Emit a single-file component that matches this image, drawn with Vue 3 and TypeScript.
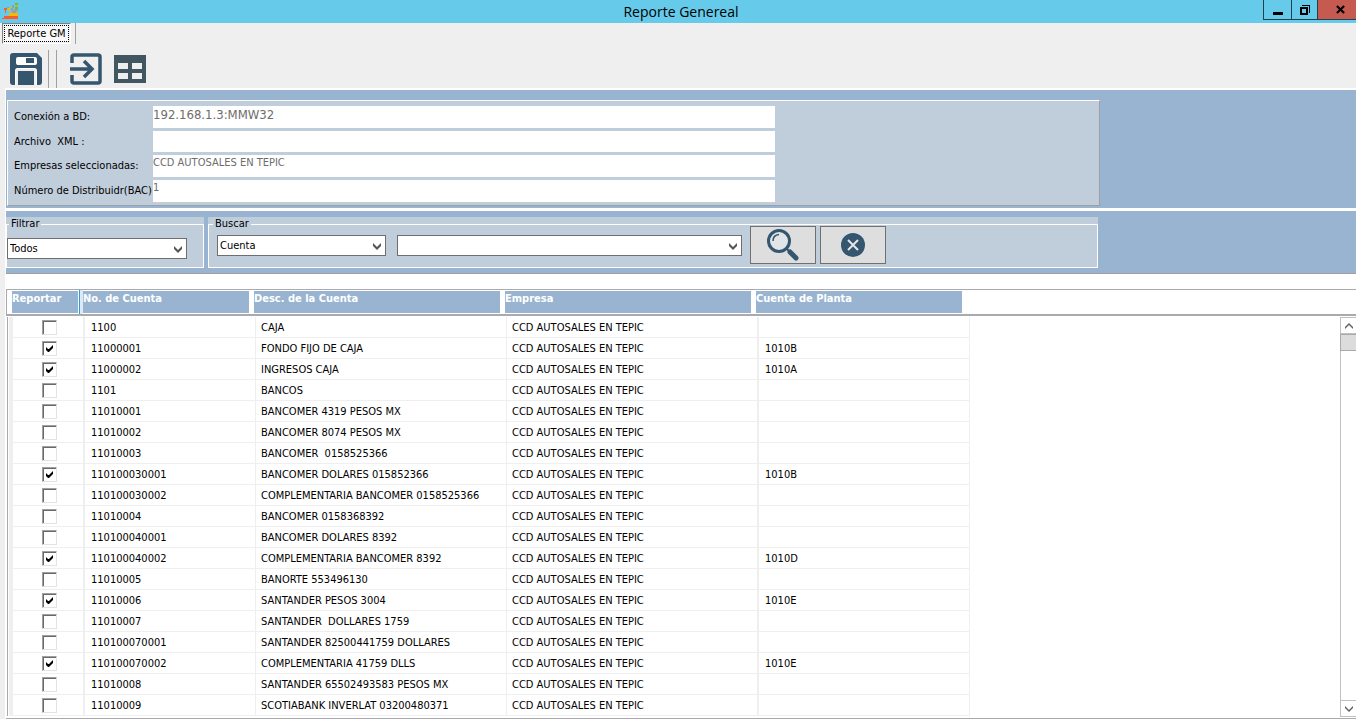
<script setup lang="ts">
import { ref } from 'vue'

interface Account {
  report: boolean
  number: string
  description: string
  company: string
  plant: string
}

const company = 'CCD AUTOSALES EN TEPIC'

const entries: [string, string, string?][] = [
  ['1100', 'CAJA'],
  ['11000001', 'FONDO FIJO DE CAJA', '1010B'],
  ['11000002', 'INGRESOS CAJA', '1010A'],
  ['1101', 'BANCOS'],
  ['11010001', 'BANCOMER 4319 PESOS MX'],
  ['11010002', 'BANCOMER 8074 PESOS MX'],
  ['11010003', 'BANCOMER  0158525366'],
  ['110100030001', 'BANCOMER DOLARES 015852366', '1010B'],
  ['110100030002', 'COMPLEMENTARIA BANCOMER 0158525366'],
  ['11010004', 'BANCOMER 0158368392'],
  ['110100040001', 'BANCOMER DOLARES 8392'],
  ['110100040002', 'COMPLEMENTARIA BANCOMER 8392', '1010D'],
  ['11010005', 'BANORTE 553496130'],
  ['11010006', 'SANTANDER PESOS 3004', '1010E'],
  ['11010007', 'SANTANDER  DOLLARES 1759'],
  ['110100070001', 'SANTANDER 82500441759 DOLLARES'],
  ['110100070002', 'COMPLEMENTARIA 41759 DLLS', '1010E'],
  ['11010008', 'SANTANDER 65502493583 PESOS MX'],
  ['11010009', 'SCOTIABANK INVERLAT 03200480371'],
]

const accounts = ref<Account[]>(
  entries.map(([number, description, plant]) => ({
    report: plant !== undefined,
    number,
    description,
    company,
    plant: plant ?? '',
  })),
)

const connection = ref('192.168.1.3:MMW32')
const xmlFile = ref('')
const selectedCompanies = ref(company)
const dealerNumber = ref('1')
const filter = ref('Todos')
const searchField = ref('Cuenta')
const searchValue = ref('')

function clearSearch(): void {
  searchValue.value = ''
}
</script>

<template>
  <div class="window">
    <header class="titlebar">
      <svg class="logo" viewBox="0 0 16 16" shape-rendering="crispEdges" aria-hidden="true">
        <path fill="#ff5a28" d="M2 13h14v3H0v-1h2zM2 5h3v2H4v3H3V7H2z" />
        <path fill="#ffb500" d="M7 10h9v3H7zM6 5h2v3H6zM9 3h1v2H9z" />
        <path fill="#8fa3a5" d="M5 4h2v1H5zM9 5h2v3H9zM10 2h2v3h-2zM12 6h4v2h-2v2h-4V8h2zM14 3h1v3h-1z" />
        <path fill="#8ab800" d="M13 0h3v2h-3zM13 4h3v2h-3z" />
      </svg>
      <h1>Reporte Genereal</h1>
      <div class="window-buttons">
        <button type="button" class="minimize" aria-label="Minimizar">
          <svg viewBox="0 0 10 10" shape-rendering="crispEdges"><path d="M0 7h10v3H0z" /></svg>
        </button>
        <button type="button" class="restore" aria-label="Restaurar">
          <svg viewBox="0 0 10 10" shape-rendering="crispEdges">
            <path fill-rule="evenodd" d="M0 2h8v8H0zM2 4v4h4V4zM2 0h8v8H9V1H2z" />
          </svg>
        </button>
        <button type="button" class="close" aria-label="Cerrar">
          <svg viewBox="0 0 10 10"><path fill="none" stroke="#000" stroke-width="2.400" d="M1 1l8 8M9 1L1 9" /></svg>
        </button>
      </div>
    </header>

    <nav class="tabs">
      <button type="button" class="tab"><span>Reporte GM</span></button>
    </nav>

    <div class="toolbar">
      <button type="button" class="tool" aria-label="Guardar">
        <svg viewBox="0 0 32 32">
          <path fill="#34566f" d="M3 0h24l5 5v24q0 3-3 3h-2V18q0-3-3-3H8q-3 0-3 3v14H3q-3 0-3-3V3q0-3 3-3z" />
          <path fill="#34566f" d="M8 18h16v14H8z" />
          <path fill="#fff" d="M8 4h17q2 0 2 2v4q0 2-2 2H8q-2 0-2-2V6q0-2 2-2z" />
          <path fill="#34566f" d="M16 5h8v5h-8z" />
          <path fill="none" stroke="#fff" d="M5.500 32V18q0-2.500 2.500-2.500h16q2.500 0 2.500 2.500v14" />
        </svg>
      </button>
      <span class="divider"></span>
      <span class="divider"></span>
      <button type="button" class="tool export" aria-label="Exportar">
        <svg viewBox="0 0 32 32" fill="none" stroke="#34566f">
          <path stroke-width="3.500" d="M2 10V4q0-2 2-2h24q2 0 2 2v24q0 2-2 2H4q-2 0-2-2v-6" />
          <path stroke-width="3.500" d="M0 16h21M14 8l8 8-8 8" />
        </svg>
      </button>
      <button type="button" class="tool" aria-label="Tabla">
        <svg viewBox="0 0 32 32" shape-rendering="crispEdges">
          <path fill="#425660" fill-rule="evenodd" d="M0 2h32v28H0zM4 10v6h10v-6zM18 10v6h10v-6zM4 20v6h10v-6zM18 20v6h10v-6z" />
        </svg>
      </button>
    </div>

    <main class="content">
      <section class="band connection-band">
        <div class="connection">
          <label for="connection">Conexión a BD:</label>
          <input id="connection" v-model="connection" class="large" type="text" />
          <label for="xml">Archivo&nbsp; XML :</label>
          <input id="xml" v-model="xmlFile" type="text" />
          <label for="companies">Empresas seleccionadas:</label>
          <input id="companies" v-model="selectedCompanies" type="text" />
          <label for="dealer">Número de Distribuidr(BAC)</label>
          <input id="dealer" v-model="dealerNumber" type="text" />
        </div>
      </section>

      <section class="band search-band">
        <div class="group filter-group">
          <fieldset>
            <legend>Filtrar</legend>
            <div class="combo filter-combo">
              <select v-model="filter" aria-label="Filtrar">
                <option>Todos</option>
              </select>
              <svg viewBox="0 0 8 7"><path d="M0 0l4 4 4-4v3L4 7 0 3z" /></svg>
            </div>
          </fieldset>
        </div>
        <div class="group search-group">
          <fieldset>
            <legend>Buscar</legend>
            <div class="combo field-combo">
              <select v-model="searchField" aria-label="Buscar por">
                <option>Cuenta</option>
              </select>
              <svg viewBox="0 0 8 7"><path d="M0 0l4 4 4-4v3L4 7 0 3z" /></svg>
            </div>
            <div class="combo value-combo">
              <select v-model="searchValue" aria-label="Valor">
                <option value=""></option>
              </select>
              <svg viewBox="0 0 8 7"><path d="M0 0l4 4 4-4v3L4 7 0 3z" /></svg>
            </div>
            <div class="actions">
              <button type="button" aria-label="Buscar">
                <svg viewBox="0 0 32 32">
                  <circle cx="12" cy="12" r="10.500" fill="#e2e5e7" stroke="#34566f" stroke-width="3" />
                  <path fill="none" stroke="#34566f" stroke-width="1.500" d="M6 12q0-6 6-6.500" />
                  <path stroke="#34566f" stroke-width="2" d="M19 19l3 3" />
                  <path stroke="#34566f" stroke-width="5" stroke-linecap="round" d="M23 23l6 6" />
                </svg>
              </button>
              <button type="button" aria-label="Limpiar" @click="clearSearch">
                <svg viewBox="0 0 32 32">
                  <circle cx="16" cy="16" r="12" fill="#34566f" />
                  <path stroke="#e4e8ea" stroke-width="2" d="M11 11l10 10M21 11L11 21" />
                </svg>
              </button>
            </div>
          </fieldset>
        </div>
      </section>

      <section class="grid">
        <table>
          <colgroup>
            <col class="c-report" />
            <col class="c-number" />
            <col class="c-text" />
            <col class="c-text" />
            <col class="c-plant" />
            <col />
          </colgroup>
          <thead>
            <tr>
              <th><span>Reportar</span></th>
              <th><span>No. de Cuenta</span></th>
              <th><span>Desc. de la Cuenta</span></th>
              <th><span>Empresa</span></th>
              <th><span>Cuenta de Planta</span></th>
              <td class="rest"></td>
            </tr>
          </thead>
          <tbody>
            <tr v-for="account in accounts" :key="account.number">
              <td class="report">
                <input v-model="account.report" type="checkbox" :aria-label="`Reportar ${account.number}`" />
              </td>
              <td class="number">{{ account.number }}</td>
              <td class="text">{{ account.description }}</td>
              <td class="text">{{ account.company }}</td>
              <td class="plant">{{ account.plant }}</td>
              <td class="rest"></td>
            </tr>
          </tbody>
        </table>
        <div class="scroll">
          <div class="scroll-head"></div>
          <div class="scrollbar">
            <button type="button" aria-label="Subir">
              <svg viewBox="0 0 8 6"><path d="M0 4l4-4 4 4v2L4 2 0 6z" /></svg>
            </button>
            <div class="thumb"></div>
            <button type="button" class="down" aria-label="Bajar">
              <svg viewBox="0 0 8 6"><path d="M0 0l4 4 4-4v2L4 6 0 2z" /></svg>
            </button>
          </div>
        </div>
      </section>
    </main>
  </div>
</template>

<style>
body {
  margin: 0;
}
</style>

<style scoped>
.window {
  display: flex;
  flex-direction: column;
  height: 100vh;
  overflow: hidden;
  background: #efefef;
  color: #000;
  font-family: "DejaVu Sans Condensed", "DejaVu Sans", sans-serif;
  font-size: 11px;
  line-height: 14px;
}
.window * {
  box-sizing: border-box;
}
button,
input,
select {
  margin: 0;
  padding: 0;
  border: 0;
  border-radius: 0;
  background: none;
  color: inherit;
  font: inherit;
}
svg {
  display: block;
}

/* Title bar */
.titlebar {
  display: grid;
  grid-template-columns: 93px 1fr 93px;
  flex: none;
  height: 23px;
  background: #66cbea;
}
.logo {
  width: 16px;
  height: 16px;
  margin: 3px 0 0 2px;
}
h1 {
  margin: 0;
  padding-left: 6px;
  font: 400 14px/23px "Open Sans", "Noto Sans", sans-serif;
  text-align: center;
}
.window-buttons {
  display: flex;
  height: 20px;
}
.window-buttons button {
  display: flex;
  align-items: center;
  justify-content: center;
  width: 28px;
  border: 1px solid #24404c;
  border-width: 0 0 1px 1px;
}
.window-buttons .restore {
  width: 26px;
}
.window-buttons .close {
  flex: 1;
  padding-left: 6px;
  background: #c45a50;
}
.window-buttons svg {
  width: 10px;
  height: 10px;
}
.window-buttons .close svg {
  width: 9px;
  height: 9px;
}

/* Tabs */
.tabs {
  display: flex;
  flex: none;
  width: 76px;
  height: 21px;
  padding-left: 2px;
  border-right: 1px solid #a0a0a0;
}
.tab {
  width: 69px;
  height: 21px;
  padding: 1px;
  border: 1px solid #fff;
  border-top-color: #808080;
  border-left-color: #808080;
}
.tab span {
  display: block;
  border: 1px dotted #000;
  background: #f8f8f8;
  line-height: 15px;
  white-space: nowrap;
}

/* Toolbar */
.toolbar {
  display: flex;
  align-items: flex-start;
  flex: none;
  height: 44px;
  padding: 6px 0 0 10px;
}
.tool {
  width: 32px;
  height: 32px;
  margin: 3px 12px 0 0;
}
.tool:first-child {
  margin-right: 6px;
}
.tool svg {
  width: 32px;
  height: 32px;
}
.divider {
  width: 1px;
  height: 38px;
  margin-right: 7px;
  background: #a0a0a0;
}
.export {
  margin-left: 6px;
}

/* Panels */
.content {
  display: flex;
  flex-direction: column;
  flex: 1;
  min-height: 0;
  margin-left: 5px;
  border-left: 1px solid #fff;
}
.band {
  flex: none;
  background: #99b4d1;
}
.connection-band {
  padding: 10px 0 2px 1px;
  border-top: 2px solid #fff;
}
.connection {
  display: grid;
  grid-template-columns: 138px minmax(0, 622px);
  grid-template-rows: 22px 21px 22px 22px;
  row-gap: 3px;
  column-gap: 1px;
  max-width: 1093px;
  padding: 5px 0 3px 6px;
  border: 1px solid #fff;
  border-right-color: #a0a0a0;
  border-bottom-color: #a0a0a0;
  background: #c0cddb;
}
.connection label {
  align-self: center;
  white-space: nowrap;
}
.connection input {
  width: 100%;
  padding-bottom: 6px;
  background: #fff;
  color: #6d6d6d;
}
.connection .large {
  padding-bottom: 4px;
  font-size: 13px;
}
.search-band {
  display: flex;
  gap: 4px;
  padding: 6px 0 5px;
  border-top: 3px solid #fff;
  border-bottom: 1px solid #a0a0a0;
}
.group {
  height: 51px;
  background: #c0cddb;
}
.filter-group {
  width: 198px;
}
.search-group {
  width: 890px;
}
fieldset {
  display: flex;
  align-items: flex-start;
  min-width: 0;
  height: 51px;
  margin: 0;
  padding: 0 8px;
  border: 1px solid #fff;
}
.filter-group fieldset {
  padding: 0;
}
legend {
  margin: 0 -4px;
  padding: 0 2px;
}
.filter-group legend {
  margin-left: 2px;
}
.combo {
  position: relative;
  height: 21px;
  border: 1px solid #6e6e6e;
  background: #fff;
}
.combo select {
  width: 100%;
  height: 19px;
  padding: 0 20px 0 2px;
  appearance: none;
}
.combo svg {
  position: absolute;
  top: 7px;
  right: 4px;
  width: 8px;
  height: 7px;
  fill: #555;
  pointer-events: none;
}
.filter-combo {
  width: 180px;
  margin-top: 7px;
}
.field-combo {
  width: 169px;
  margin: 4px 11px 0 0;
}
.value-combo {
  width: 345px;
  margin: 4px 8px 0 0;
}
.actions {
  display: flex;
  gap: 4px;
  margin-top: -5px;
}
.actions button {
  display: flex;
  align-items: center;
  justify-content: center;
  width: 66px;
  height: 38px;
  border: 1px solid #707070;
  background: #dedede;
}
.actions svg {
  width: 32px;
  height: 32px;
}

/* Account grid */
.grid {
  display: flex;
  flex: 1;
  min-height: 0;
  padding-top: 15px;
  border-bottom: 1px solid #a9a9ae;
  background: #fff;
  overflow: hidden;
}
table {
  flex: 1;
  width: 0;
  height: 0;
  table-layout: fixed;
  border-spacing: 0;
}
.c-report {
  width: 77px;
}
.c-number {
  width: 171px;
}
.c-text {
  width: 251px;
}
.c-plant {
  width: 214px;
}
thead th,
thead .rest {
  height: 27px;
  padding: 1px 5px 1px 0;
  border-top: 1px solid #a9a9ae;
  border-bottom: 2px solid #a9a9ae;
  text-align: left;
}
thead th:first-child {
  padding-left: 5px;
  border-left: 1px solid #a9a9ae;
  background: linear-gradient(90deg, transparent 72px, #2a9fd6 72px, #2a9fd6 73px, #dce9f7 73px);
}
thead th:nth-child(5) {
  padding-right: 8px;
}
thead th span {
  display: block;
  height: 22px;
  background: #99b4d1;
  color: #fff;
  font-weight: 700;
  line-height: 16px;
}
tbody td {
  height: 21px;
  padding: 2px 0 0;
  border-bottom: 1px solid #efefef;
  white-space: pre;
}
tbody tr:first-child td {
  height: 22px;
  border-top: 1px solid #fff;
}
tbody .report {
  padding: 0 0 0 10px;
  border-bottom: 0;
  background:
    linear-gradient(90deg, #fff 1px, #a9a9ae 1px, #a9a9ae 2px, #fff 2px, #fff 3px, #efefef 3px) left top / 7px 100% no-repeat,
    linear-gradient(#efefef, #efefef) left bottom / 100% 1px no-repeat;
}
tbody .number {
  padding-left: 6px;
  border-left: 2px solid #efefef;
}
tbody .text {
  padding-left: 7px;
  background: linear-gradient(90deg, transparent 1px, #efefef 1px, #efefef 2px, transparent 2px);
}
tbody .plant {
  padding-left: 9px;
  border-right: 1px solid #efefef;
  background: linear-gradient(90deg, transparent 1px, #efefef 1px, #efefef 3px, transparent 3px);
}
tbody .rest {
  border-bottom: 0;
}
input[type="checkbox"] {
  display: block;
  width: 15px;
  height: 15px;
  margin: 0 auto;
  padding: 3px;
  border: 1px solid #e3e3e3;
  border-top-color: #a0a0a0;
  border-left-color: #a0a0a0;
  background: #fff;
  box-shadow: inset 1px 1px #696969;
  appearance: none;
}
input[type="checkbox"]:checked::before {
  display: block;
  width: 7px;
  height: 7px;
  background: #000;
  clip-path: polygon(0 2px, 0 5px, 2px 7px, 3px 7px, 7px 3px, 7px 0, 3px 4px, 2px 4px);
  content: "";
}

/* Scroll bar */
.scroll {
  display: flex;
  flex-direction: column;
  width: 16px;
}
.scroll-head {
  height: 27px;
  border-top: 1px solid #a9a9ae;
  border-bottom: 2px solid #a9a9ae;
}
.scrollbar {
  display: flex;
  flex: 1;
  flex-direction: column;
  margin: 1px 0;
  border-left: 1px solid #c0c0c0;
}
.scrollbar button {
  display: flex;
  align-items: center;
  justify-content: center;
  height: 17px;
  border: 1px solid #c0c0c0;
  border-width: 1px 0;
}
.scrollbar svg {
  width: 8px;
  height: 6px;
  fill: #606060;
}
.thumb {
  height: 17px;
  margin-left: -1px;
  border: 1px solid #a9a9a9;
  border-right: 0;
  background: #dcdcdc;
}
.scrollbar .down {
  margin-top: auto;
}
</style>
